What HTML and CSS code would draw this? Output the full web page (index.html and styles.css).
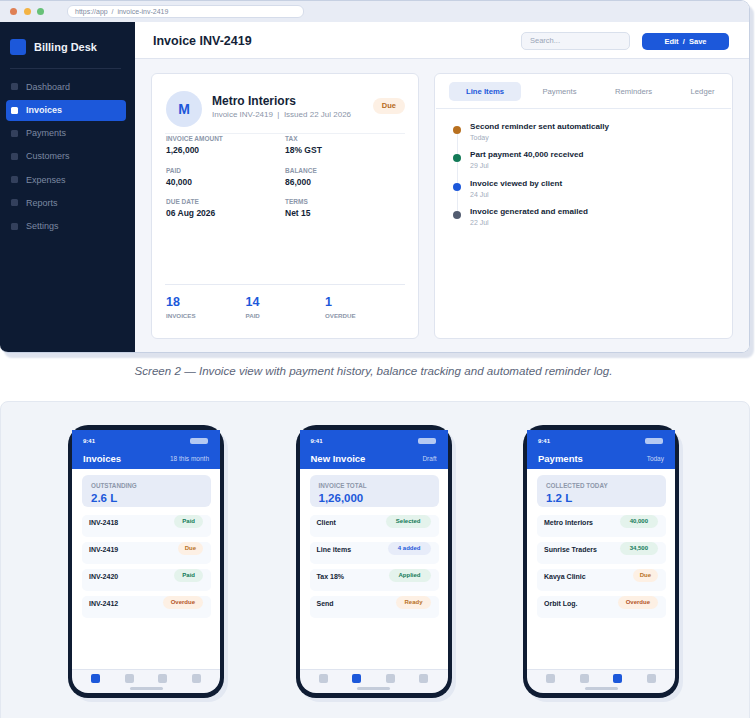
FILE: index.html
```html
<!DOCTYPE html>
<html lang="en">
  <head>
    <meta charset="UTF-8" />
    <meta name="viewport" content="width=device-width, initial-scale=1.0" />
    <title>Billing Desk</title>
    <link rel="stylesheet" href="styles.css">
  </head>
  <body>
    <div class="window">
      <div class="chrome">
        <div class="dots">
          <span class="dot dot-red"></span>
          <span class="dot dot-amber"></span>
          <span class="dot dot-green"></span>
        </div>
        <div class="url">https://app &nbsp;/&nbsp; invoice-inv-2419</div>
      </div>
      <div class="app">
        <aside class="sidebar">
          <div class="brand">
            <span class="brand-mark"></span>
            <span class="brand-name">Billing Desk</span>
          </div>
          <nav class="side-nav">
            <a class="side-item"><i></i>Dashboard</a>
            <a class="side-item active"><i></i>Invoices</a>
            <a class="side-item"><i></i>Payments</a>
            <a class="side-item"><i></i>Customers</a>
            <a class="side-item"><i></i>Expenses</a>
            <a class="side-item"><i></i>Reports</a>
            <a class="side-item"><i></i>Settings</a>
          </nav>
        </aside>
        <main class="main">
          <header class="topbar">
            <h1>Invoice INV-2419</h1>
            <div class="top-actions">
              <div class="search">Search...</div>
              <div class="primary-btn">Edit &nbsp;/&nbsp; Save</div>
            </div>
          </header>
          <div class="cards">
            <section class="card detail">
              <div class="client">
                <div class="avatar">M</div>
                <div class="client-text">
                  <div class="client-name">Metro Interiors</div>
                  <div class="client-sub">Invoice INV-2419 &nbsp;|&nbsp; Issued 22 Jul 2026</div>
                </div>
                <span class="due-pill">Due</span>
              </div>
              <div class="fields">
                <div><label>INVOICE AMOUNT</label><b>1,26,000</b></div>
                <div><label>TAX</label><b>18% GST</b></div>
                <div><label>PAID</label><b>40,000</b></div>
                <div><label>BALANCE</label><b>86,000</b></div>
                <div><label>DUE DATE</label><b>06 Aug 2026</b></div>
                <div><label>TERMS</label><b>Net 15</b></div>
              </div>
              <div class="stats">
                <div><strong>18</strong><label>INVOICES</label></div>
                <div><strong>14</strong><label>PAID</label></div>
                <div><strong>1</strong><label>OVERDUE</label></div>
              </div>
            </section>
            <section class="card activity">
              <div class="tabs">
                <span class="tab active">Line Items</span>
                <span class="tab">Payments</span>
                <span class="tab">Reminders</span>
                <span class="tab">Ledger</span>
              </div>
              <div class="timeline">
                <div class="event"><span class="marker amber"></span><div><b>Second reminder sent automatically</b><small>Today</small></div></div>
                <div class="event"><span class="marker green"></span><div><b>Part payment 40,000 received</b><small>29 Jul</small></div></div>
                <div class="event"><span class="marker blue"></span><div><b>Invoice viewed by client</b><small>24 Jul</small></div></div>
                <div class="event"><span class="marker slate"></span><div><b>Invoice generated and emailed</b><small>22 Jul</small></div></div>
              </div>
            </section>
          </div>
        </main>
      </div>
    </div>

    <p class="caption">Screen 2 — Invoice view with payment history, balance tracking and automated reminder log.</p>

    <div class="phones">
      <div class="phone">
        <div class="phone-head">
          <div class="status"><span>9:41</span><i></i></div>
          <div class="phone-title"><b>Invoices</b><span>18 this month</span></div>
        </div>
        <div class="phone-body">
          <div class="summary"><label>OUTSTANDING</label><strong>2.6 L</strong></div>
          <div class="row"><b>INV-2418</b><span class="pill ok">Paid</span></div>
          <div class="row"><b>INV-2419</b><span class="pill warn tight">Due</span></div>
          <div class="row"><b>INV-2420</b><span class="pill ok">Paid</span></div>
          <div class="row"><b>INV-2412</b><span class="pill warn late">Overdue</span></div>
        </div>
        <div class="phone-nav">
          <div class="nav-icons"><i class="on"></i><i></i><i></i><i></i></div>
          <div class="home-bar"></div>
        </div>
      </div>

      <div class="phone">
        <div class="phone-head">
          <div class="status"><span>9:41</span><i></i></div>
          <div class="phone-title"><b>New Invoice</b><span>Draft</span></div>
        </div>
        <div class="phone-body">
          <div class="summary"><label>INVOICE TOTAL</label><strong>1,26,000</strong></div>
          <div class="row"><b>Client</b><span class="pill ok wide">Selected</span></div>
          <div class="row"><b>Line items</b><span class="pill info wide">4 added</span></div>
          <div class="row"><b>Tax 18%</b><span class="pill ok wide">Applied</span></div>
          <div class="row"><b>Send</b><span class="pill warn">Ready</span></div>
        </div>
        <div class="phone-nav">
          <div class="nav-icons"><i></i><i class="on"></i><i></i><i></i></div>
          <div class="home-bar"></div>
        </div>
      </div>

      <div class="phone">
        <div class="phone-head">
          <div class="status"><span>9:41</span><i></i></div>
          <div class="phone-title"><b>Payments</b><span>Today</span></div>
        </div>
        <div class="phone-body">
          <div class="summary"><label>COLLECTED TODAY</label><strong>1.2 L</strong></div>
          <div class="row"><b>Metro Interiors</b><span class="pill ok wide">40,000</span></div>
          <div class="row"><b>Sunrise Traders</b><span class="pill ok wide">34,500</span></div>
          <div class="row"><b>Kavya Clinic</b><span class="pill warn tight">Due</span></div>
          <div class="row"><b>Orbit Log.</b><span class="pill warn late">Overdue</span></div>
        </div>
        <div class="phone-nav">
          <div class="nav-icons"><i></i><i></i><i class="on"></i><i></i></div>
          <div class="home-bar"></div>
        </div>
      </div>
    </div>
  </body>
</html>
```

FILE: styles.css
```css
* {
  margin: 0;
  padding: 0;
  box-sizing: border-box;
}

html,
body {
  height: 100%;
  overflow: hidden;
  background: white;
  font-family: "Liberation Sans", Arial, sans-serif;
  color: #141f38;
}

label {
  display: block;
}

/* browser window */

.window {
  width: 750px;
  height: 353px;
  display: flex;
  flex-direction: column;
  overflow: hidden;
  border: 1px solid #c6d0e2;
  border-left: 0;
  border-radius: 0 9px 8px 8px;
  box-shadow: 4px 5px 2px #dde2ed;
}

.chrome {
  height: 21px;
  flex: none;
  display: flex;
  align-items: center;
  padding-left: 10px;
  background: #e8ecf5;
}

.dots {
  display: flex;
  gap: 6.5px;
}

.dot {
  width: 7px;
  height: 7px;
  border-radius: 50%;
}

.dot-red {
  background: #df8055;
}

.dot-amber {
  background: #f3b344;
}

.dot-green {
  background: #67c178;
}

.url {
  width: 237px;
  height: 13px;
  margin-left: 23px;
  padding-left: 7px;
  font-size: 7px;
  line-height: 11px;
  color: #808b9f;
  background: white;
  border: 1px solid #d5dcea;
  border-radius: 6px;
}

.app {
  flex: 1;
  display: flex;
  min-height: 0;
}

/* sidebar */

.sidebar {
  width: 135px;
  flex: none;
  padding: 17px 9px 0 6px;
  background: #0d1b33;
}

.brand {
  width: 111px;
  display: flex;
  align-items: center;
  gap: 8px;
  margin-left: 4px;
  padding-bottom: 13px;
  border-bottom: 1px solid #222f49;
}

.brand-mark {
  width: 16px;
  height: 16px;
  border-radius: 3px;
  background: #1c58da;
}

.brand-name {
  font-size: 11px;
  font-weight: bold;
  color: #eef2f9;
}

.side-nav {
  display: flex;
  flex-direction: column;
  gap: 2.2px;
  margin-top: 7.4px;
}

.side-item {
  height: 21px;
  display: flex;
  align-items: center;
  gap: 8px;
  padding-left: 5px;
  border-radius: 4px;
  font-size: 9px;
  color: #7c89a2;
}

.side-item i {
  width: 7px;
  height: 7px;
  border-radius: 1.5px;
  background: #33405c;
}

.side-item.active {
  background: #1c58da;
  color: #eef3fc;
  font-weight: bold;
}

.side-item.active i {
  background: white;
}

/* main area */

.main {
  flex: 1;
  min-width: 0;
  display: flex;
  flex-direction: column;
  background: #f3f5fa;
}

.topbar {
  height: 37px;
  flex: none;
  display: flex;
  align-items: center;
  justify-content: space-between;
  padding: 2px 20px 0 18px;
  background: white;
  border-bottom: 1px solid #dfe4ef;
}

.topbar h1 {
  font-size: 12.5px;
  color: #141f38;
}

.top-actions {
  display: flex;
  align-items: center;
  gap: 12px;
}

.search {
  width: 109px;
  height: 18px;
  padding-left: 8px;
  font-size: 7.5px;
  line-height: 16px;
  color: #9aa5b8;
  background: #f3f5fa;
  border: 1px solid #d9e0ec;
  border-radius: 5px;
}

.primary-btn {
  width: 87px;
  height: 17px;
  font-size: 7.5px;
  font-weight: bold;
  line-height: 17px;
  text-align: center;
  color: white;
  background: #1c58da;
  border-radius: 5px;
}

.cards {
  flex: 1;
  display: flex;
  gap: 15px;
  padding: 14px 16px 13px;
}

.card {
  background: white;
  border: 1px solid #dfe4ef;
  border-radius: 6px;
}

/* invoice card */

.detail {
  width: 268px;
  flex: none;
  display: flex;
  flex-direction: column;
  padding: 17px 13px 18px;
}

.client {
  display: flex;
  align-items: flex-start;
  padding: 0 0 6px 1px;
  border-bottom: 1px solid #eef1f6;
}

.avatar {
  width: 36px;
  height: 36px;
  flex: none;
  border-radius: 50%;
  font-size: 14px;
  font-weight: bold;
  line-height: 36px;
  text-align: center;
  color: #1c58da;
  background: #dbe5f8;
}

.client-text {
  flex: 1;
  margin-left: 10px;
  padding-top: 3px;
}

.client-name {
  font-size: 12px;
  font-weight: bold;
  line-height: 15px;
}

.client-sub {
  font-size: 8px;
  line-height: 12px;
  color: #8b95a8;
}

.due-pill {
  margin-top: 7px;
  padding: 0 9px;
  height: 16px;
  font-size: 7.5px;
  font-weight: bold;
  line-height: 16px;
  color: #b56a1c;
  background: #fdf0e4;
  border-radius: 8px;
}

.fields {
  display: grid;
  grid-template-columns: 119px 1fr;
  row-gap: 9.5px;
  padding-left: 1px;
}

.fields label {
  font-size: 6.5px;
  font-weight: bold;
  line-height: 9px;
  color: #8d97aa;
}

.fields b {
  display: block;
  margin-top: 1px;
  font-size: 8.5px;
  line-height: 12px;
}

.stats {
  display: flex;
  margin-top: auto;
  padding: 9px 0 0 1px;
  border-top: 1px solid #e6eaf3;
}

.stats div {
  width: 79.5px;
}

.stats strong {
  display: block;
  font-size: 12.5px;
  line-height: 16px;
  color: #1c58da;
}

.stats label {
  margin-top: 2px;
  font-size: 6.2px;
  font-weight: bold;
  line-height: 8px;
  color: #8d97aa;
}

/* activity card */

.activity {
  flex: 1;
  min-width: 0;
  padding: 1px;
}

.tabs {
  display: flex;
  gap: 4.4px;
  padding: 7px 0 7px 13px;
  border-bottom: 1px solid #e6ebf4;
}

.tab {
  height: 19px;
  padding: 0 17px;
  font-size: 7.7px;
  line-height: 19px;
  white-space: nowrap;
  color: #8b95a8;
  border-radius: 5px;
}

.tab.active {
  font-weight: bold;
  color: #1c58da;
  background: #e6ecf8;
}

.timeline {
  position: relative;
  display: flex;
  flex-direction: column;
  gap: 5.3px;
  padding: 12px 0 0 17px;
}

.timeline::before {
  content: "";
  position: absolute;
  left: 21px;
  top: 20px;
  height: 85px;
  width: 1px;
  background: #e8ecf4;
}

.event {
  display: flex;
  align-items: center;
  gap: 9px;
  position: relative;
}

.event b {
  display: block;
  font-size: 8.1px;
  line-height: 11px;
}

.event small {
  display: block;
  font-size: 7px;
  line-height: 12px;
  color: #a2acbc;
}

.marker {
  width: 8px;
  height: 8px;
  flex: none;
  border-radius: 50%;
  margin-top: -5px;
}

.marker.amber {
  background: #b8701f;
}

.marker.green {
  background: #127a57;
}

.marker.blue {
  background: #1c58da;
}

.marker.slate {
  background: #525c70;
}

/* caption */

.caption {
  height: 45px;
  margin-top: 3px;
  padding: 9px 8px 0 0;
  font-size: 11.6px;
  font-style: italic;
  line-height: 12px;
  text-align: center;
  color: #5b6579;
}

/* phones */

.phones {
  width: 750px;
  height: 330px;
  display: flex;
  justify-content: center;
  gap: 71.5px;
  padding: 23px 3px 0 0;
  background: #f1f4f9;
  border: 1px solid #e3e8f1;
  border-radius: 8px;
}

.phone {
  width: 156px;
  height: 273px;
  flex: none;
  display: flex;
  flex-direction: column;
  padding: 5px 4px;
  background: #0f1c33;
  border-radius: 20px;
  box-shadow: 4px 4px 0 #e3e8f2;
}

.phone-head {
  height: 39px;
  flex: none;
  padding: 7px 11px 0;
  color: white;
  background: #1c58da;
}

.status {
  height: 8px;
  display: flex;
  align-items: center;
  justify-content: space-between;
  font-size: 6px;
  font-weight: bold;
}

.status i {
  width: 18px;
  height: 6px;
  margin-right: 1px;
  border-radius: 2px;
  background: #b4c9f2;
}

.phone-title {
  display: flex;
  align-items: center;
  justify-content: space-between;
  margin-top: 8px;
}

.phone-title b {
  font-size: 9.5px;
}

.phone-title span {
  font-size: 6.5px;
  color: #c4d5f6;
}

.phone-body {
  flex: 1;
  display: flex;
  flex-direction: column;
  gap: 5px;
  padding: 6px 9px 0 10px;
  background: white;
}

.summary {
  height: 32px;
  margin-bottom: 3px;
  padding: 7px 9px 0;
  background: #e7ecf7;
  border-radius: 6px;
}

.summary label {
  font-size: 6.3px;
  font-weight: bold;
  line-height: 7px;
  color: #8d97aa;
}

.summary strong {
  display: block;
  margin-top: 3px;
  font-size: 11.5px;
  line-height: 13px;
  color: #1c58da;
}

.row {
  height: 22px;
  display: flex;
  justify-content: space-between;
  align-items: flex-start;
  padding: 0 8px 0 7px;
  background: #f6f9fd;
  border-radius: 5px;
}

.row b {
  font-size: 7px;
  line-height: 15px;
}

.pill {
  height: 13px;
  padding: 0 8px;
  font-size: 6px;
  font-weight: bold;
  line-height: 13px;
  border-radius: 7px;
}

.pill.wide {
  padding: 0 10px;
}

.pill.tight {
  padding: 0 7px;
}

.pill.ok {
  color: #127a57;
  background: #e4f3ec;
}

.pill.warn {
  color: #b8701f;
  background: #fdf0e4;
}

.pill.info {
  color: #1c58da;
  background: #e7ecf9;
}

.pill.late {
  color: #b4552a;
}

.phone-nav {
  height: 24px;
  flex: none;
  padding-top: 4px;
  background: #f3f5fa;
  border-top: 1px solid #dfe4ef;
  border-radius: 0 0 16px 16px;
}

.nav-icons {
  display: flex;
  justify-content: space-between;
  padding: 0 19px;
}

.nav-icons i {
  width: 9px;
  height: 9px;
  border-radius: 2px;
  background: #c4ccda;
}

.nav-icons i.on {
  background: #1c58da;
}

.home-bar {
  width: 33px;
  height: 3px;
  margin: 3.5px auto 0;
  border-radius: 2px;
  background: #c4ccda;
}
```
